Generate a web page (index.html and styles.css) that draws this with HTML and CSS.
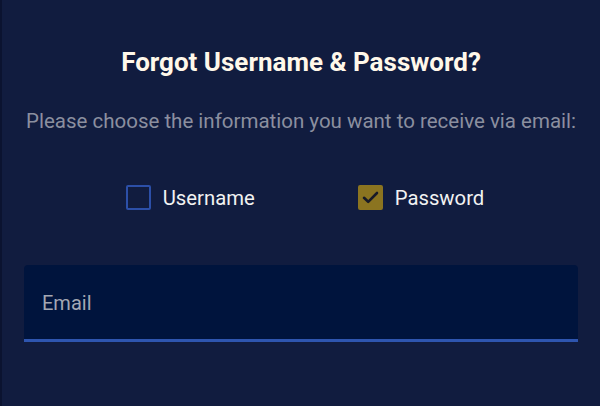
FILE: index.html
```html
<!DOCTYPE html>
<html>
<head>
    <title>Forgot Username &amp; Password</title>
    <link rel="stylesheet" href="styles.css">
</head>
<body>
    <div class="container">
        <h1>Forgot Username &amp; Password?</h1>
        <p class="hint">Please choose the information you want to receive via email:</p>
        <!-- what to send -->
        <div class="choices">
            <label class="choice">
                <span class="box"></span>
                Username
            </label>
            <label class="choice">
                <span class="box checked">
                    <svg width="25" height="25" viewBox="0 0 25 25">
                        <path d="M6 12.8 L10.2 16.8 L19 8" fill="none" stroke="#171a28" stroke-width="2.6" stroke-linecap="round" stroke-linejoin="round"/>
                    </svg>
                </span>
                Password
            </label>
        </div>
        <!-- email input -->
        <div class="field">
            <input type="text" name="email" placeholder="Email" spellcheck="false">
        </div>
    </div>
</body>
</html>
```

FILE: styles.css
```css
html {
    background-color: #111c3f;
}
body {
    margin: 0;
    font-family: Roboto, "Noto Sans", sans-serif;
    border-left: 2px solid #0b1330;
    min-height: 406px;
    box-sizing: border-box;
}
.container {
    padding: 44px 22px 0 22px;
    text-align: center;
}
h1 {
    margin: 0;
    font-size: 26px;
    font-weight: 700;
    color: #fff8ea;
    line-height: 36px;
}
.hint {
    margin: 28px 0 0 0;
    font-size: 20.5px;
    color: #8b8f9f;
    line-height: 26px;
}
.choices {
    display: flex;
    justify-content: center;
    gap: 103px;
    margin: 51px 0 0 8px;
}
.choice {
    display: flex;
    align-items: center;
    gap: 12px;
    font-size: 20.3px;
    color: #f2f2f2;
}
.box {
    width: 21px;
    height: 21px;
    border: 2px solid #2c4fa8;
    border-radius: 2px;
    display: flex;
    align-items: center;
    justify-content: center;
}
.box.checked {
    background-color: #8b7420;
    border-color: #8b7420;
}
.box svg {
    flex-shrink: 0;
}
.field {
    margin-top: 55px;
}
input {
    display: block;
    width: 100%;
    box-sizing: border-box;
    height: 77px;
    padding: 2px 18px 0 18px;
    background-color: #00143d;
    border: none;
    border-bottom: 3px solid #2e55af;
    border-radius: 4px 4px 0 0;
    font-family: Roboto, "Noto Sans", sans-serif;
    font-size: 20px;
    color: #e0e0e0;
    outline: none;
}
input::placeholder {
    color: #a3a7b3;
}
```
